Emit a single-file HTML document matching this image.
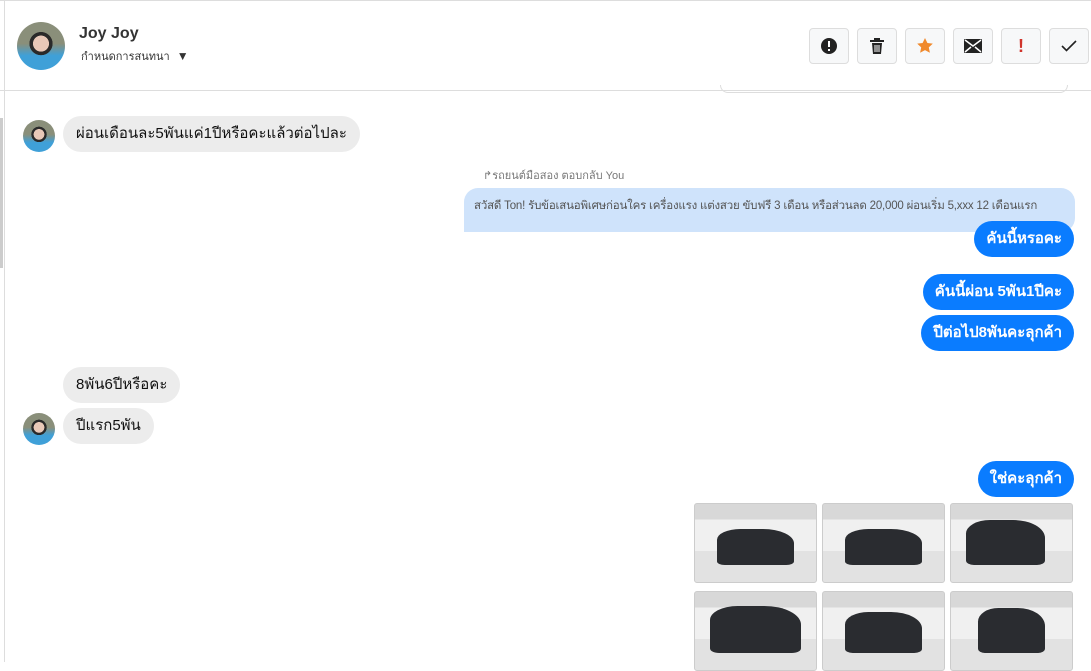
<!DOCTYPE html>
<html><head><meta charset="utf-8"><style>
*{margin:0;padding:0;box-sizing:border-box}
body{width:1091px;height:662px;overflow:hidden;background:#fff;font-family:"Liberation Sans","Noto Sans CJK SC",sans-serif;position:relative}
.abs{position:absolute}
.av{position:absolute;border-radius:50%;background:radial-gradient(circle at 50% 45%,#e8c8b8 0 22%,#2a2a2a 23% 32%,transparent 33%),linear-gradient(#8a8f7a 0 45%,#3fa0d8 70%);}
.bin{position:absolute;background:#ececec;border-radius:18px;color:#111;font-size:15px;padding:0 13px;line-height:36px;white-space:nowrap}
.bout{position:absolute;right:17px;background:#0a7cff;border-radius:18px;color:#fff;font-size:15px;font-weight:bold;padding:0 12px;line-height:36px;white-space:nowrap}
.btn{position:absolute;top:28px;width:40px;height:36px;border:1px solid #ddd;border-radius:4px;background:#f7f8f9;display:flex;align-items:center;justify-content:center}
.img{position:absolute;width:123px;border:1px solid #ccc;border-radius:3px;background:linear-gradient(#d8d8d8 0 20%,#f0f0f0 20% 60%,#e2e2e2 60%);overflow:hidden}
.car{position:absolute;left:18%;right:18%;top:32%;bottom:22%;background:#2a2c30;border-radius:30% 40% 10% 10%}
</style></head><body>
<div class="abs" style="left:0;top:0;width:1091px;height:1px;background:#ddd"></div>
<div class="abs" style="left:4px;top:0;width:1px;height:662px;background:#ddd"></div>
<div class="abs" style="left:0;top:90px;width:1091px;height:1px;background:#ddd"></div>
<div class="abs" style="left:0;top:118px;width:3px;height:150px;background:#ccc"></div>
<div class="av" style="left:17px;top:22px;width:48px;height:48px"></div>
<div class="abs" style="left:79px;top:25px;font-size:16px;font-weight:bold;color:#333">Joy Joy</div>
<div class="abs" style="left:81px;top:47px;font-size:11px;color:#333;white-space:nowrap">กำหนดการสนทนา <span style="font-size:12px;margin-left:4px">▼</span></div>
<div class="btn" style="left:809px"><svg width="18" height="18"><circle cx="9" cy="9" r="8" fill="#222"/><rect x="8" y="4" width="2" height="6" fill="#fff"/><rect x="8" y="12" width="2" height="2" fill="#fff"/></svg></div>
<div class="btn" style="left:857px"><svg width="16" height="18"><rect x="1" y="3" width="14" height="2" fill="#222"/><rect x="5" y="1" width="6" height="2" fill="#222"/><path d="M3 6h10l-1 11H4z" fill="#222"/><path d="M6 8v7M8 8v7M10 8v7" stroke="#fff"/></svg></div>
<div class="btn" style="left:905px"><svg width="18" height="18"><path d="M9 1l2.4 5 5.4.6-4 3.8 1.1 5.4L9 13.1 4.1 15.8l1.1-5.4-4-3.8 5.4-.6z" fill="#f0892c"/></svg></div>
<div class="btn" style="left:953px"><svg width="18" height="14"><rect width="18" height="14" rx="1" fill="#222"/><path d="M1 1l8 6 8-6M1 13l6-5M17 13l-6-5" stroke="#fff" stroke-width="1.5" fill="none"/></svg></div>
<div class="btn" style="left:1001px;color:#d0342c;font-weight:bold;font-size:18px">!</div>
<div class="btn" style="left:1049px"><svg width="16" height="12"><path d="M1 6l4.5 4.5L15 1" stroke="#222" stroke-width="1.6" fill="none"/></svg></div>
<div class="abs" style="left:720px;top:85px;width:348px;height:8px;border:1px solid #ddd;border-top:none;border-radius:0 0 8px 8px"></div>

<div class="av" style="left:23px;top:120px;width:32px;height:32px"></div>
<div class="bin" style="left:63px;top:116px">ผ่อนเดือนละ5พันแค่1ปีหรือคะแล้วต่อไปละ</div>
<div class="abs" style="left:483px;top:166px;font-size:11px;color:#777;white-space:nowrap">↱รถยนต์มือสอง ตอบกลับ You</div>
<div class="abs" style="left:464px;top:188px;width:611px;height:44px;background:#cfe3fb;border-radius:14px 14px 14px 0;font-size:11.5px;color:#555;padding:9px 10px;white-space:nowrap;overflow:hidden;letter-spacing:-0.2px">สวัสดี Ton! รับข้อเสนอพิเศษก่อนใคร เครื่องแรง แต่งสวย ขับฟรี 3 เดือน หรือส่วนลด 20,000 ผ่อนเริ่ม 5,xxx 12 เดือนแรก</div>
<div class="bout" style="top:221px">คันนี้หรอคะ</div>
<div class="bout" style="top:274px">คันนี้ผ่อน 5พัน1ปีคะ</div>
<div class="bout" style="top:315px">ปีต่อไป8พันคะลุกค้า</div>
<div class="bin" style="left:63px;top:367px">8พัน6ปีหรือคะ</div>
<div class="av" style="left:23px;top:413px;width:32px;height:32px"></div>
<div class="bin" style="left:63px;top:408px">ปีแรก5พัน</div>
<div class="bout" style="top:461px">ใช่คะลุกค้า</div>
<div class="img" style="left:694px;top:503px;height:80px"><div class="car"></div></div>
<div class="img" style="left:822px;top:503px;height:80px"><div class="car"></div></div>
<div class="img" style="left:950px;top:503px;height:80px"><div class="car" style="left:12%;right:22%;top:20%"></div></div>
<div class="img" style="left:694px;top:591px;height:80px"><div class="car" style="top:18%;left:12%;right:12%"></div></div>
<div class="img" style="left:822px;top:591px;height:80px"><div class="car" style="top:25%"></div></div>
<div class="img" style="left:950px;top:591px;height:80px"><div class="car" style="top:20%;left:22%;right:22%"></div></div>
</body></html>
